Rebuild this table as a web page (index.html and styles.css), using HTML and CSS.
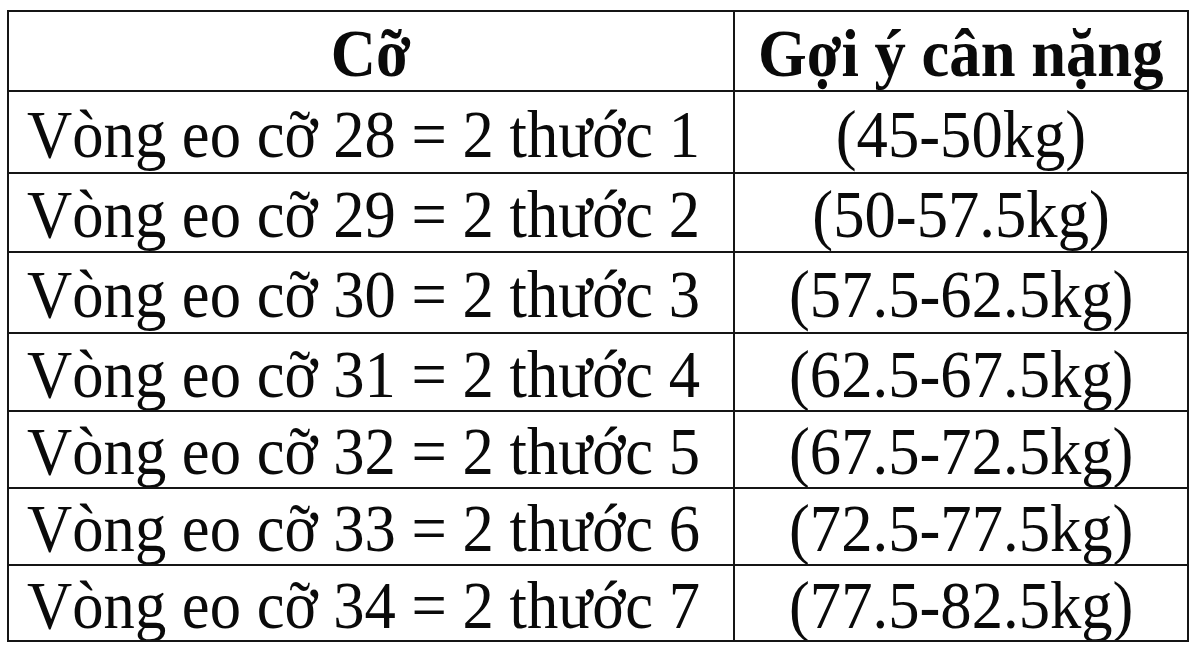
FILE: index.html
```html
<!DOCTYPE html>
<html lang="vi">
<head>
<meta charset="utf-8">
<link rel="stylesheet" href="styles.css">
</head>
<body>
<table class="size-table">
  <thead>
    <tr><th class="col-size"><span class="txt">Cỡ</span></th><th class="col-weight"><span class="txt">Gợi ý cân nặng</span></th></tr>
  </thead>
  <tbody>
    <tr><td class="size"><span class="txt">Vòng eo cỡ 28 = 2 thước 1</span></td><td class="weight"><span class="txt">(45-50kg)</span></td></tr>
    <tr><td class="size"><span class="txt">Vòng eo cỡ 29 = 2 thước 2</span></td><td class="weight"><span class="txt">(50-57.5kg)</span></td></tr>
    <tr><td class="size"><span class="txt">Vòng eo cỡ 30 = 2 thước 3</span></td><td class="weight"><span class="txt">(57.5-62.5kg)</span></td></tr>
    <tr><td class="size"><span class="txt">Vòng eo cỡ 31 = 2 thước 4</span></td><td class="weight"><span class="txt">(62.5-67.5kg)</span></td></tr>
    <tr><td class="size"><span class="txt">Vòng eo cỡ 32 = 2 thước 5</span></td><td class="weight"><span class="txt">(67.5-72.5kg)</span></td></tr>
    <tr><td class="size"><span class="txt">Vòng eo cỡ 33 = 2 thước 6</span></td><td class="weight"><span class="txt">(72.5-77.5kg)</span></td></tr>
    <tr><td class="size"><span class="txt">Vòng eo cỡ 34 = 2 thước 7</span></td><td class="weight"><span class="txt">(77.5-82.5kg)</span></td></tr>
  </tbody>
</table>
</body>
</html>
```
FILE: styles.css
```css
html, body {
  margin: 0;
  padding: 0;
  background: #fff;
}
body {
  padding: 10px 0 0 7px;
  font-family: "Liberation Serif", "Times New Roman", serif;
  color: #0a0a0a;
}
.size-table {
  border-collapse: collapse;
  width: 1182px;
  table-layout: fixed;
}
.size-table th,
.size-table td {
  border: 2px solid #151515;
  padding: 4px 0 0 0;
  font-size: 67px;
  line-height: 1;
  white-space: nowrap;
  overflow: hidden;
}
.txt {
  display: inline-block;
  transform: scaleX(0.935);
  transform-origin: center;
}
.size-table th {
  height: 74px;
  font-weight: bold;
  text-align: center;
}
.col-size { width: 724px; }
.size-table td {
  height: 72px;
}
.size-table tbody tr:nth-child(1) td { height: 76px; }
.size-table tbody tr:nth-child(2) td { height: 73px; }
.size-table tbody tr:nth-child(3) td { height: 75px; }
.size-table tbody tr:nth-child(4) td { height: 72px; }
.size-table tbody tr:nth-child(5) td { height: 71px; }
.size-table tbody tr:nth-child(6) td { height: 71px; }
.size-table tbody tr:nth-child(7) td { height: 70px; }
.size-table td.size {
  text-align: left;
  padding-left: 18px;
}
.size-table td.size .txt {
  transform-origin: left center;
}
.size-table td.weight {
  text-align: center;
}
```
